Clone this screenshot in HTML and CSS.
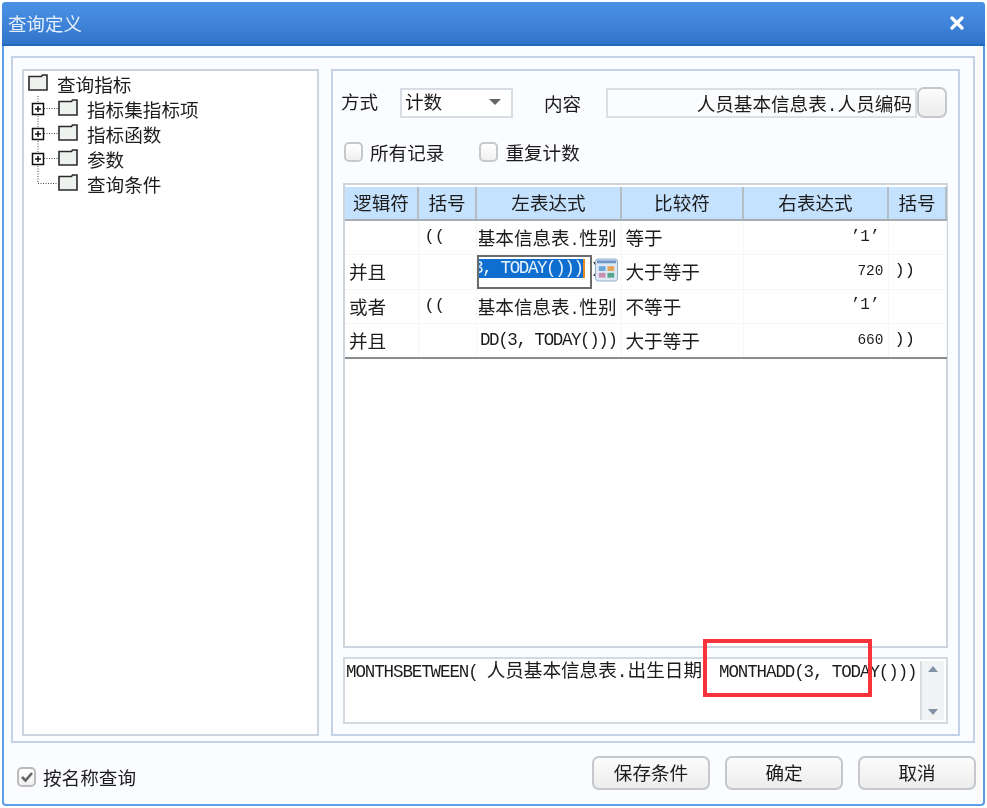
FILE: index.html
```html
<!DOCTYPE html>
<html lang="zh">
<head>
<meta charset="utf-8">
<title>查询定义</title>
<link rel="stylesheet" href="styles.css">
</head>
<body>
<div class="window">
  <header class="titlebar">
    <span class="title">查询定义</span>
    <svg class="close" width="14" height="14" viewBox="0 0 14 14"><path d="M2 2L12 12M12 2L2 12" stroke="#fff" stroke-width="3.2" stroke-linecap="round"/></svg>
  </header>
  <div class="body">
    <div class="frame">
      <aside class="tree">
        <div class="node root">
          <svg class="ticon" width="20" height="25" viewBox="0 0 20 25"><path d="M1 5.500h12.500l1-1.500h4.500v15H1z" fill="#eef2ee" stroke="#2a2a2a" stroke-width="1.600"/></svg>
          <span>查询指标</span>
        </div>
        <div class="node">
          <svg class="tlead" width="50" height="25" viewBox="0 0 50 25"><path d="M10 0V25M16 12.500H30" stroke="#444" stroke-dasharray="1 1.500"/><rect x="4.500" y="7.500" width="11" height="11" fill="#fff" stroke="#111" stroke-width="1.500"/><path d="M7 13H13M10 10V16" stroke="#111" stroke-width="1.500"/><path d="M31 5.500h12.500l1-1.500h4.500v15H31z" fill="#eef2ee" stroke="#2a2a2a" stroke-width="1.600"/></svg>
          <span>指标集指标项</span>
        </div>
        <div class="node">
          <svg class="tlead" width="50" height="25" viewBox="0 0 50 25"><path d="M10 0V25M16 12.500H30" stroke="#444" stroke-dasharray="1 1.500"/><rect x="4.500" y="7.500" width="11" height="11" fill="#fff" stroke="#111" stroke-width="1.500"/><path d="M7 13H13M10 10V16" stroke="#111" stroke-width="1.500"/><path d="M31 5.500h12.500l1-1.500h4.500v15H31z" fill="#eef2ee" stroke="#2a2a2a" stroke-width="1.600"/></svg>
          <span>指标函数</span>
        </div>
        <div class="node">
          <svg class="tlead" width="50" height="25" viewBox="0 0 50 25"><path d="M10 0V25M16 12.500H30" stroke="#444" stroke-dasharray="1 1.500"/><rect x="4.500" y="7.500" width="11" height="11" fill="#fff" stroke="#111" stroke-width="1.500"/><path d="M7 13H13M10 10V16" stroke="#111" stroke-width="1.500"/><path d="M31 5.500h12.500l1-1.500h4.500v15H31z" fill="#eef2ee" stroke="#2a2a2a" stroke-width="1.600"/></svg>
          <span>参数</span>
        </div>
        <div class="node">
          <svg class="tlead" width="50" height="25" viewBox="0 0 50 25"><path d="M10 0V12.500H30" fill="none" stroke="#444" stroke-dasharray="1 1.500"/><path d="M31 5.500h12.500l1-1.500h4.500v15H31z" fill="#eef2ee" stroke="#2a2a2a" stroke-width="1.600"/></svg>
          <span>查询条件</span>
        </div>
      </aside>
      <main class="panel">
        <div class="form-row">
          <label class="lbl-mode">方式</label>
          <div class="select"><span>计数</span><i class="caret"></i></div>
          <label class="lbl-content">内容</label>
          <div class="field">人员基本信息表<span class="dot">.</span>人员编码</div>
          <div class="pick"></div>
        </div>
        <div class="check-row">
          <label class="check"><i class="box"></i>所有记录</label>
          <label class="check"><i class="box"></i>重复计数</label>
        </div>
        <div class="grid">
          <table>
            <colgroup><col class="c1"><col class="c2"><col class="c3"><col class="c4"><col class="c5"><col class="c6"></colgroup>
            <thead>
              <tr><th>逻辑符</th><th>括号</th><th>左表达式</th><th>比较符</th><th>右表达式</th><th>括号</th></tr>
            </thead>
            <tbody>
              <tr><td></td><td class="paren">((</td><td class="expr"><div class="clip"><span>基本信息表<span class="dot">.</span>性别</span></div></td><td>等于</td><td class="num">’1’</td><td class="paren"></td></tr>
              <tr><td>并且</td><td></td>
                <td class="editing">
                  <div class="editor"><span class="sel">3, TODAY()))</span><i class="cursor"></i></div>
                  <span class="after">)</span>
                  <svg class="calc" width="23" height="24" viewBox="0 0 24 24"><rect x=".5" y=".5" width="23" height="23" rx="3" fill="#dfe9f5" stroke="#8fa9cc"/><rect x="2" y="2" width="20" height="3" fill="#6f95c4"/><rect x="4" y="8" width="7" height="5" fill="#6aa5d8"/><rect x="13" y="8" width="7" height="5" fill="#e3a35a"/><rect x="4" y="15" width="7" height="5" fill="#c98fae"/><rect x="13" y="15" width="7" height="5" fill="#55a890"/></svg>
                </td>
                <td>大于等于</td><td class="num small">720</td><td class="paren">))</td></tr>
              <tr><td>或者</td><td class="paren">((</td><td class="expr"><div class="clip"><span>基本信息表<span class="dot">.</span>性别</span></div></td><td>不等于</td><td class="num">’1’</td><td class="paren"></td></tr>
              <tr><td>并且</td><td></td><td class="expr mono"><div class="clip"><span>DD(3, TODAY()))</span></div></td><td>大于等于</td><td class="num small">660</td><td class="paren">))</td></tr>
            </tbody>
          </table>
        </div>
        <div class="formula">
          <div class="formula-text"><span class="m lead">MONTHSBETWEEN(</span><span>人员基本信息表<span class="dot">.</span>出生日期</span><span class="m tail">MONTHADD(3, TODAY()))</span></div>
          <div class="scroll"><i class="up"></i><i class="down"></i></div>
          <div class="mark"></div>
        </div>
      </main>
    </div>
    <footer class="footer">
      <label class="check by-name"><i class="box on"><svg width="14" height="12" viewBox="0 0 14 12"><path d="M2 6L5.500 9.500L12 2" fill="none" stroke="#666" stroke-width="2.600"/></svg></i>按名称查询</label>
      <div class="buttons">
        <button class="btn">保存条件</button>
        <button class="btn">确定</button>
        <button class="btn">取消</button>
      </div>
    </footer>
  </div>
</div>
</body>
</html>
```
FILE: styles.css
```css
* { box-sizing: border-box; }
html, body { margin: 0; height: 100%; background: #fff; }
body {
  padding: 2px 2px 2px 2px;
  font-family: "Noto Sans CJK SC", "Liberation Sans", sans-serif;
  font-size: 18.600px;
  color: #1c1c1c;
  overflow: hidden;
}
.window {
  height: 804px;
  border-radius: 4px;
  border: 2px solid #5e9ee6;
  border-top: 0;
  background: #fafcff;
  display: flex;
  flex-direction: column;
  filter: blur(.45px);
}
.titlebar {
  height: 44px;
  margin: 0 -2px;
  flex: none;
  border-radius: 4px 4px 0 0;
  background: linear-gradient(#4a91e4, #3f83d8 55%, #2f74c9);
  border-bottom: 2px solid #2168bd;
  display: flex;
  align-items: center;
  justify-content: space-between;
  padding: 0 21px 0 6px;
  color: #e4effb;
}
.title { font-size: 18.500px; }
.body { flex: 1; display: flex; flex-direction: column; padding: 10px 8px 0 7px; min-height: 0; }
.frame {
  height: 687px;
  flex: none;
  border: 2px solid #c3d2e6;
  padding: 11px 13px 5px 9px;
  display: flex;
  gap: 12px;
}
.tree {
  width: 297px;
  border: 2px solid #ccd4de;
  background: #fff;
  padding: 0 0 0 4px;
}
.node { height: 25px; display: flex; align-items: center; line-height: 25px; }
.ticon, .tlead { margin-right: 9px; }
.panel {
  flex: 1;
  border: 2px solid #c3d2e6;
  padding: 16px 10px 6px 10px;
  display: flex;
  flex-direction: column;
  min-width: 0;
}
.form-row { display: flex; align-items: center; height: 31px; flex: none; margin-left: -2px; }
.lbl-mode { width: 59px; position: relative; top: -2px; }
.select {
  width: 113px;
  height: 30px;
  border: 2px solid #d8dde3;
  background: #fff;
  display: flex;
  align-items: center;
  justify-content: space-between;
  padding: 0 10px 4px 3px;
}
.caret { border: 6px solid transparent; border-top: 6px solid #666; border-bottom: 0; margin-top: 2px; }
.lbl-content { width: 62px; margin-left: 31px; }
.field {
  width: 311px;
  height: 30px;
  border: 2px solid #dbdfe4;
  background: #fbfcfe;
  text-align: right;
  line-height: 25px;
  padding-right: 3px;
  white-space: nowrap;
}
.dot { font-family: "Liberation Mono", monospace; font-size: 18px; }
.clip .dot { font-size: 16px; }
.pick {
  width: 30px;
  height: 31px;
  border: 2px solid #c4c8cc;
  border-radius: 7px;
  background: linear-gradient(#fcfcfc, #ececec);
}
.check-row { display: flex; gap: 35px; margin-top: 22px; padding-left: 1px; flex: none; }
.check { display: flex; align-items: center; gap: 7px; line-height: 24px; }
.box {
  width: 19px;
  height: 20px;
  border: 2px solid #c6c8cb;
  border-radius: 5px;
  background: linear-gradient(#fff, #f0f0f0);
  display: flex;
  align-items: center;
  justify-content: center;
}
.grid {
  flex: 1;
  margin-top: 19px;
  border: 2px solid #ccd4de;
  background: #fff;
  padding: 2px 0 0 0;
  min-height: 0;
}
table { border-collapse: collapse; table-layout: fixed; width: 601px; border-bottom: 2px solid #8a8d90; }
.c1 { width: 73px; } .c2 { width: 58px; } .c3 { width: 145px; }
.c4 { width: 122px; } .c5 { width: 145px; } .c6 { width: 58px; }
th {
  height: 33px;
  padding: 0 0 3px;
  font-weight: 400;
  background: #c4e1fd;
  border-right: 2px solid #b4bcc4;
  border-bottom: 2px solid #a6adb4;
}
td {
  height: 34.500px;
  padding: 0 0 2px 4px;
  white-space: nowrap;
  overflow: hidden;
  border-right: 1px solid #f4f6f8;
  border-bottom: 1px solid #f4f6f8;
}
.paren { padding-left: 6px; font-family: "Liberation Mono", monospace; font-size: 17px; }
.expr { padding: 0 4px 2px 0; }
.clip { margin-left: 2px; overflow: hidden; display: flex; justify-content: flex-end; }
.clip span { flex: none; }
.mono span { font-family: "Liberation Mono", monospace; font-size: 17.500px; letter-spacing: -1.400px; }
.num { text-align: right; padding-right: 8px; font-family: "Liberation Mono", monospace; font-size: 16px; }
.num.small { font-size: 14.500px; padding-right: 4px; }
.editing { position: relative; padding: 0; overflow: visible; }
.editor {
  position: absolute;
  left: 0;
  top: 0;
  width: 115px;
  height: 34px;
  border: 2px solid #6c6c6c;
  background: #fff;
  overflow: hidden;
  display: flex;
  justify-content: flex-end;
  align-items: flex-start;
  padding: 2px 5px 0 0;
  font-family: "Liberation Mono", monospace;
  font-size: 17.500px;
  letter-spacing: -1.400px;
  line-height: 19px;
}
.sel { background: #0f6fd0; color: #e8f2fd; white-space: nowrap; flex: none; }
.cursor { width: 2px; height: 19px; background: #e88a20; flex: none; }
.after { position: absolute; left: 114px; top: 5px; font-family: "Liberation Mono", monospace; font-size: 15.500px; }
.calc { position: absolute; left: 118px; top: 3px; }
.formula {
  position: relative;
  height: 67px;
  flex: none;
  margin-top: 9px;
  margin-bottom: 4px;
  border: 2px solid #d4dae1;
  background: #fff;
  display: flex;
  justify-content: space-between;
}
.formula-text { padding: 0 0 0 1px; white-space: nowrap; line-height: 20px; }
.m { font-family: "Liberation Mono", monospace; font-size: 17.500px; letter-spacing: -1.100px; }
.lead { margin-right: 9px; }
.tail { margin-left: 17px; }
.scroll {
  width: 24px;
  margin: 2px 2px 2px 0;
  background: #f1f2f4;
  border-left: 2px solid #d8dce0;
  display: flex;
  flex-direction: column;
  justify-content: space-between;
  align-items: center;
  padding: 5px 0;
}
.up { border: 5px solid transparent; border-bottom: 6px solid #8492a8; border-top: 0; }
.down { border: 5px solid transparent; border-top: 6px solid #8492a8; border-bottom: 0; }
.mark {
  position: absolute;
  left: 358px;
  top: -20px;
  width: 169px;
  height: 58px;
  border: 4px solid #f8333a;
}
.footer { display: flex; justify-content: space-between; align-items: center; padding: 13px 0 0 6px; }
.by-name { margin-top: 7px; }
.box.on { border-color: #bbb; }
.buttons { display: flex; gap: 15px; margin-right: -1px; }
.btn {
  width: 118px;
  height: 34px;
  border: 2px solid #c4c8cc;
  border-radius: 7px;
  background: linear-gradient(#fcfcfc, #ececec);
  font: inherit;
  color: #1c1c1c;
  line-height: 26px;
  padding: 0 0 2px;
}
```
